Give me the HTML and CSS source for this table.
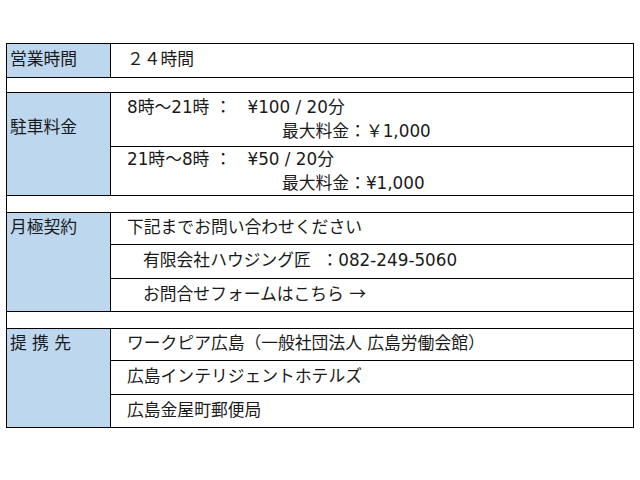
FILE: index.html
```html
<!DOCTYPE html>
<html lang="ja">
<head>
<meta charset="utf-8">
<link rel="stylesheet" href="styles.css">
</head>
<body>
<table class="info">
  <tr class="r34">
    <th>営業時間</th>
    <td>２４時間</td>
  </tr>
  <tr class="gap g15"><td colspan="2"></td></tr>
  <tr>
    <th rowspan="2" class="parking-label">駐車料金</th>
    <td class="fee fee-first">
      <div>8時～21時 ：&nbsp;&nbsp;&nbsp;¥100 / 20分</div>
      <div class="max">最大料金：￥1,000</div>
    </td>
  </tr>
  <tr>
    <td class="fee">
      <div>21時～8時 ：&nbsp;&nbsp;&nbsp;¥50 / 20分</div>
      <div class="max">最大料金：¥1,000</div>
    </td>
  </tr>
  <tr class="gap g17"><td colspan="2"></td></tr>
  <tr class="r32">
    <th rowspan="3" class="top-label">月極契約</th>
    <td>下記までお問い合わせください</td>
  </tr>
  <tr class="r34"><td class="indent">有限会社ハウジング匠&nbsp;&nbsp;：082-249-5060</td></tr>
  <tr class="r33"><td class="indent">お問合せフォームはこちら <span class="arrow">→</span></td></tr>
  <tr class="gap g17"><td colspan="2"></td></tr>
  <tr class="r32">
    <th rowspan="3" class="top-label">提 携 先</th>
    <td>ワークピア広島（一般社団法人 広島労働会館）</td>
  </tr>
  <tr class="r34"><td>広島インテリジェントホテルズ</td></tr>
  <tr class="r33"><td>広島金屋町郵便局</td></tr>
</table>
</body>
</html>
```

FILE: styles.css
```css
html, body {
  margin: 0;
  padding: 0;
  background: #ffffff;
}

body {
  padding: 43px 0 0 6px;
  font-family: "DejaVu Sans", "Noto Sans CJK JP", sans-serif;
  font-size: 16.8px;
  color: #1a1a1a;
}

.info {
  border-collapse: collapse;
  width: 628px;
  table-layout: fixed;
}

.info th,
.info td {
  border: 1px solid #000;
  padding: 0 0 3px 0;
  line-height: 24px;
  vertical-align: middle;
}

.info th {
  width: 100px;
  background: #bdd7ee;
  font-weight: normal;
  text-align: left;
  padding-left: 3px;
}

.info td {
  padding-left: 16px;
  text-align: left;
}

.info td.indent {
  padding-left: 32px;
}

.arrow {
  font-family: "Noto Sans CJK JP", sans-serif;
}

.r32 { height: 32px; }
.r33 { height: 33px; }
.r34 { height: 34px; }

.gap td { padding: 0; }
.g15 { height: 15px; }
.g17 { height: 17px; }

.parking-label {
  vertical-align: top !important;
  padding-top: 22px !important;
}

.top-label {
  vertical-align: top !important;
  padding-top: 2px !important;
}

.fee {
  height: 46px;
  padding-bottom: 0 !important;
}

.fee-first {
  padding-top: 2px !important;
  padding-bottom: 3px !important;
}

.fee .max {
  padding-left: 155px;
}
```
